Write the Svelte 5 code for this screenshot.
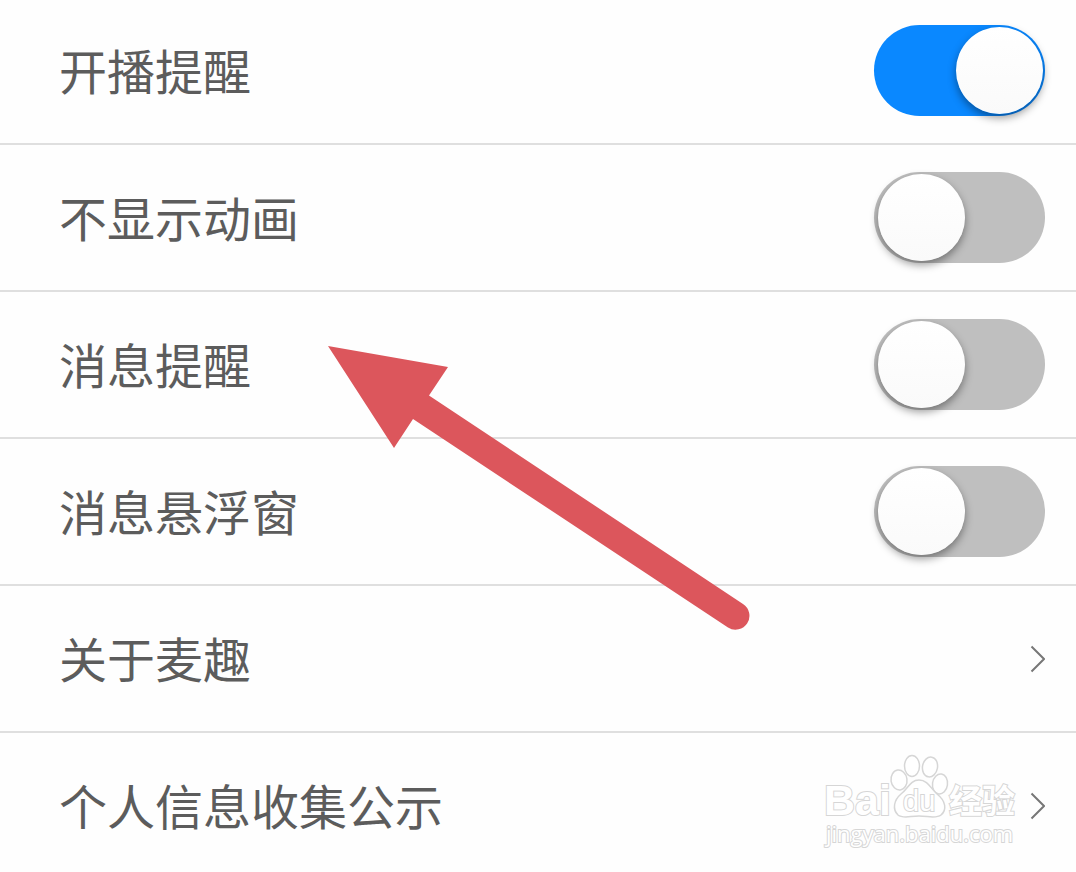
<script>
	let switches = $state([
		{ id: 'live', label: '开播提醒', on: true },
		{ id: 'animation', label: '不显示动画', on: false },
		{ id: 'message', label: '消息提醒', on: false },
		{ id: 'floating', label: '消息悬浮窗', on: false }
	]);

	const links = [
		{ href: '#about', label: '关于麦趣' },
		{ href: '#privacy', label: '个人信息收集公示' }
	];
</script>

<main class="settings">
	<ul class="list">
		{#each switches as item (item.id)}
			<li>
				<label class="row" for={item.id}>
					<span class="label">{item.label}</span>
					<input id={item.id} class="switch" type="checkbox" role="switch" bind:checked={item.on} />
				</label>
			</li>
		{/each}
		{#each links as link (link.href)}
			<li>
				<a class="row" href={link.href}>
					<span class="label">{link.label}</span>
					<svg class="chevron" width="16" height="28" viewBox="0 0 16 28" aria-hidden="true">
						<path d="M2.500 1.500 15 14 2.500 26.500" />
					</svg>
				</a>
			</li>
		{/each}
	</ul>

	<!-- Pointer over the message row -->
	<svg class="pointer" width="424" height="288" viewBox="0 0 424 288" aria-hidden="true">
		<path d="M0 0 120 21 101 49.500 415 258 A13.700 13.700 0 0 1 400 281.500 L85 73 66 102Z" />
	</svg>

	<!-- Watermark -->
	<svg class="watermark" width="204" height="100" viewBox="0 0 204 100" aria-label="Baidu 经验">
		<g class="outline">
			<text class="bai" x="4" y="64">Bai</text>
			<ellipse cx="79" cy="29" rx="8" ry="10" transform="rotate(-8 79 29)" />
			<ellipse cx="92" cy="15" rx="7.500" ry="10.500" />
			<ellipse cx="110" cy="16" rx="7.500" ry="10" transform="rotate(10 110 16)" />
			<ellipse cx="120" cy="33" rx="7.500" ry="10" transform="rotate(8 120 33)" />
			<path
				d="M99 29 C108 29 111 38 117 43 C126 50 127 59 121 64 C116 68 108 65 99 65 C90 65 83 68 78 64 C72 58 74 49 81 43 C88 38 90 29 99 29Z"
			/>
			<text class="du" x="83" y="60">du</text>
			<text class="jingyan" x="129" y="62">经验</text>
			<text class="url" x="6" y="91">jingyan.baidu.com</text>
		</g>
	</svg>
</main>

<style>
	:global(body) {
		margin: 0;
		background: #fefefe;
	}

	.settings {
		position: relative;
		overflow: hidden;
		font-family: 'Noto Sans CJK SC', sans-serif;
		color: #5c5c5c;
	}

	.list {
		margin: 0;
		padding: 0;
		list-style: none;
	}

	.row {
		display: flex;
		align-items: center;
		justify-content: space-between;
		min-height: 91px;
		padding: 27px 31px 27px 59px;
		border-bottom: 2px solid #dfdfdf;
		color: inherit;
		text-decoration: none;
		cursor: pointer;
	}

	li:first-child .row {
		padding-top: 25px;
	}

	li:last-child .row {
		padding-bottom: 20px;
		border-bottom: 0;
	}

	.label {
		padding-bottom: 4px;
		font-size: 48px;
		line-height: 72px;
	}

	.switch {
		position: relative;
		flex: none;
		appearance: none;
		width: 171px;
		height: 91px;
		margin: 0;
		border-radius: 46px;
		background: #bfbfbf;
		cursor: pointer;
		transition: background 0.2s;
	}

	.switch::before {
		content: '';
		position: absolute;
		top: 2px;
		left: 4px;
		width: 87px;
		height: 87px;
		border-radius: 50%;
		background: linear-gradient(#fff, #fafafa);
		box-shadow: 0 4px 8px rgba(0, 0, 0, 0.4);
		transition: left 0.2s;
	}

	.switch:checked {
		background: #0a88ff;
	}

	.switch:checked::before {
		left: 82px;
	}

	.chevron {
		flex: none;
		fill: none;
		stroke: #777;
		stroke-width: 2;
	}

	.pointer {
		position: absolute;
		top: 346px;
		left: 328px;
		fill: #dc565c;
		pointer-events: none;
	}

	.watermark {
		position: absolute;
		right: 52px;
		bottom: 20px;
		pointer-events: none;
	}

	.outline {
		fill: #fff;
		stroke: #d6d6d6;
		stroke-width: 1.5px;
	}

	/* Only the outer edge of each letter shows */
	.outline text {
		paint-order: stroke;
		stroke-width: 2px;
	}

	.bai {
		font: bold 43px 'Liberation Sans', sans-serif;
	}

	.du {
		font: 29px 'Liberation Sans', sans-serif;
	}

	.jingyan {
		font: bold 33px 'Noto Sans CJK SC', sans-serif;
	}

	.url {
		font: 22px 'Open Sans', sans-serif;
	}
</style>
